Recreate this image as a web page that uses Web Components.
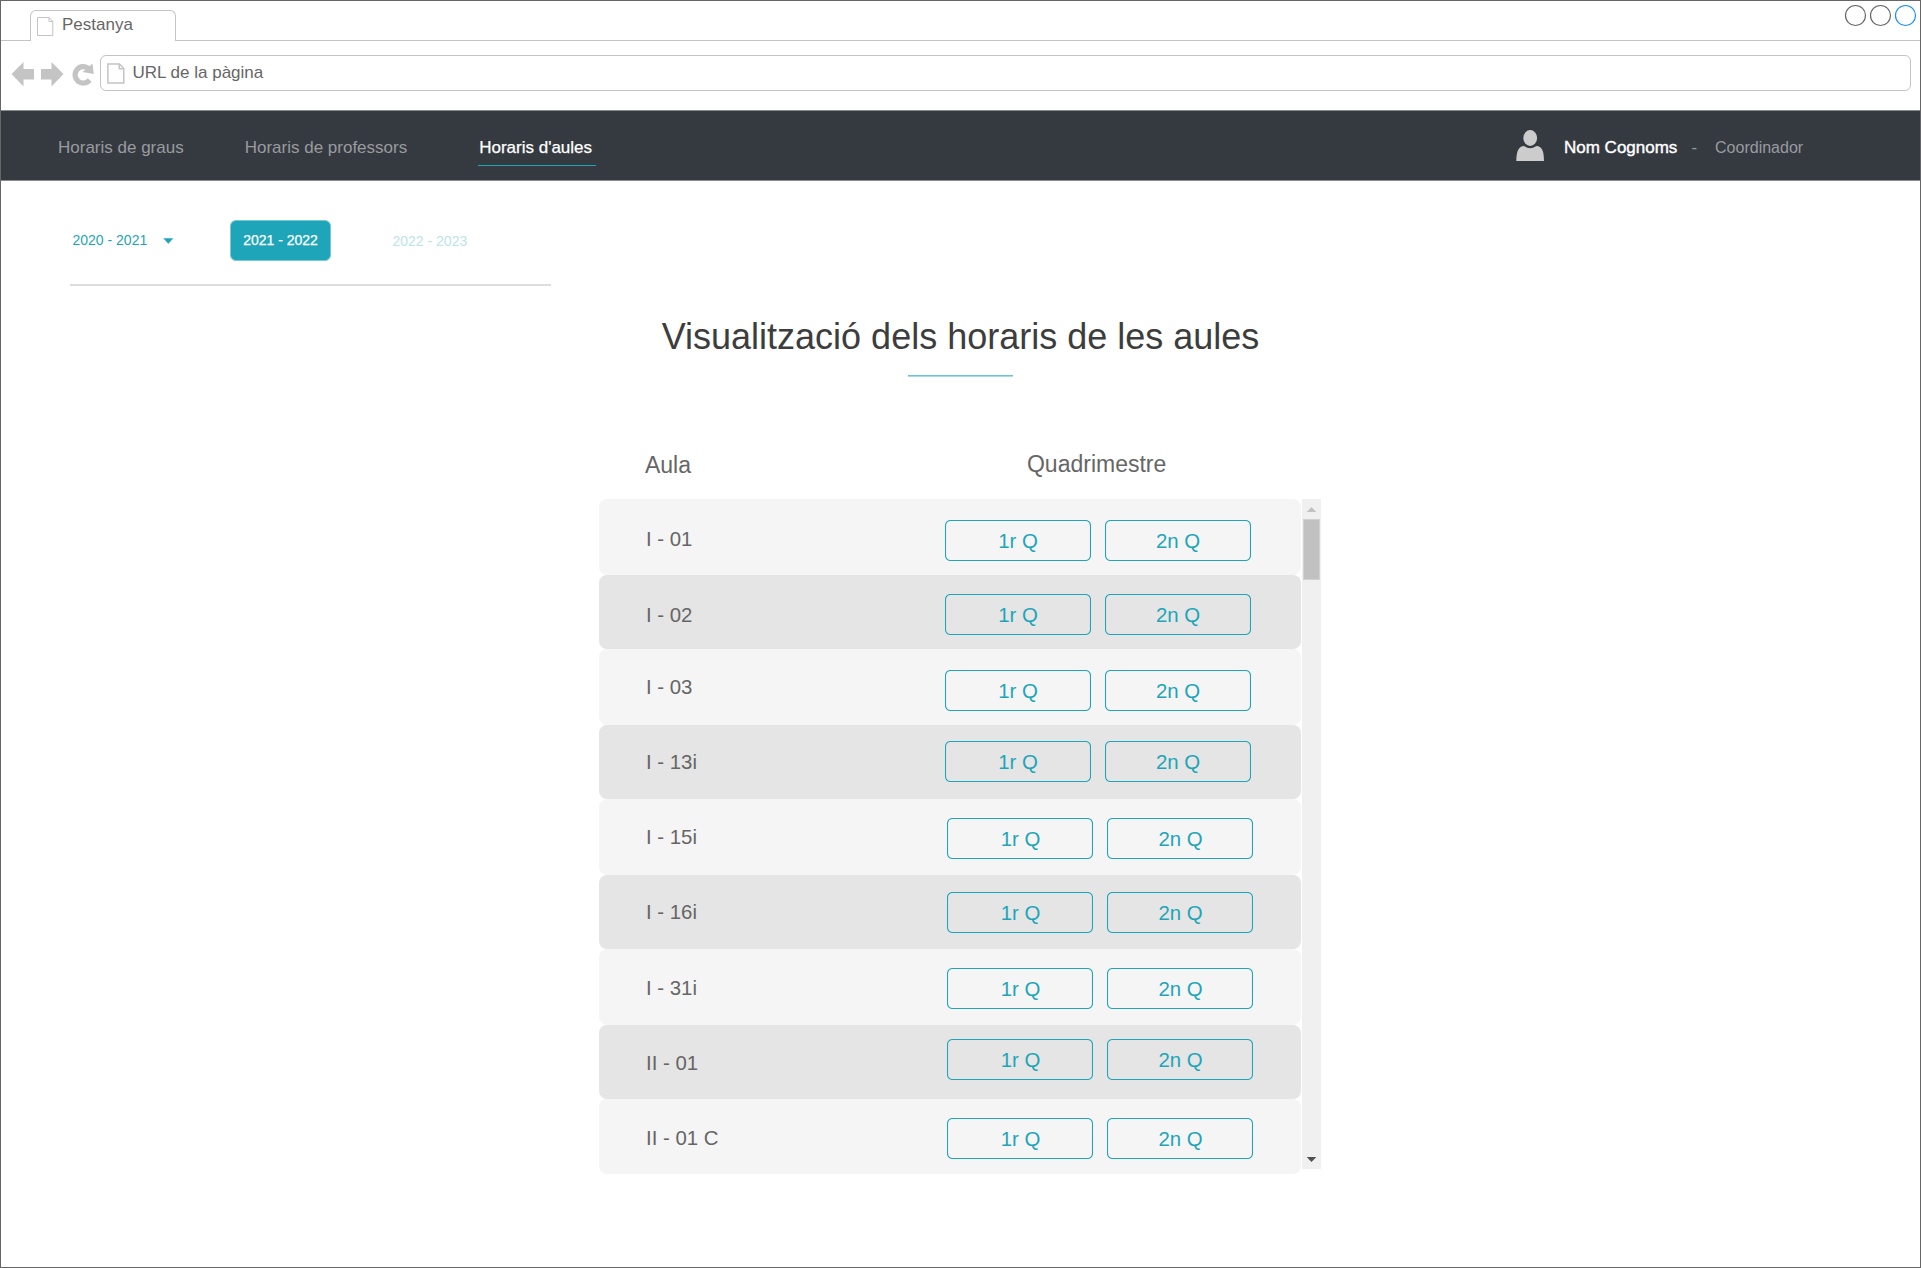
<!DOCTYPE html>
<html lang="ca">
<head>
<meta charset="utf-8">
<title>Horaris d'aules</title>
<style>
html,body{margin:0;padding:0;background:#fff}
body{font-family:"Liberation Sans",Arial,sans-serif;color:#666;overflow:hidden}
</style>
</head>
<body>
<browser-window>
  <tab-strip>Pestanya</tab-strip>
  <url-bar>URL de la pàgina</url-bar>
  <site-nav></site-nav>
  <year-picker></year-picker>
  <page-title>Visualització dels horaris de les aules</page-title>
  <room-table></room-table>
</browser-window>
<script>
const define = (name, html, setup) => customElements.define(name, class extends HTMLElement {
  constructor() {
    super();
    const t = document.createElement('template');
    t.innerHTML = '<style>*{box-sizing:border-box}svg{display:block;flex:none}</style>' + html;
    this.attachShadow({mode: 'open'}).append(t.content.cloneNode(true));
  }
  connectedCallback() { if (setup) setup(this, this.shadowRoot); }
});

define('browser-window', `<style>
:host{display:flex;flex-direction:column;box-sizing:border-box;width:1921px;height:1268px;border:1px solid #666;background:#fff}
</style><slot></slot>`);

define('tab-strip', `<style>
:host{display:flex;height:40px;font-size:17px;line-height:19px}
.lead{width:29px;border-bottom:1px solid #c4c4c4}
.tab{display:flex;width:146px;height:31px;margin-top:9px;border:1px solid #c4c4c4;border-bottom:0;border-radius:6px 6px 0 0;padding:4px 0 0 6px}
.tab svg{margin-top:1px}
.tab span{margin:0 0 0 8px}
.rest{flex:1;display:flex;justify-content:flex-end;border-bottom:1px solid #c4c4c4;padding:3px 3px 0 0}
</style>
<div class="lead"></div>
<div class="tab"><svg width="17" height="21" viewBox="0 0 17 21" fill="none" stroke="#c4c4c4"><path d="M.5 1.500H12L15.800 5.500V19.500H.5ZM12 1.500V5.500H15.800"/></svg><span><slot></slot></span></div>
<div class="rest"><svg width="73" height="24" viewBox="0 0 73 24" fill="none" stroke-width="1.200"><circle cx="11.500" cy="11.500" r="10" stroke="#666"/><circle cx="36.500" cy="11.500" r="10" stroke="#666"/><circle cx="61.500" cy="11.500" r="10" stroke="#1790f5"/></svg></div>`);

define('url-bar', `<style>
:host{display:flex;height:69px;font-size:17px;line-height:19px;padding:14px 9px 0 9px;box-sizing:border-box}
.box{flex:1;height:36px;margin-left:5px;border:1px solid #c4c4c4;border-radius:6px;display:flex;padding:7px 0 0 5.500px}
.box span{margin-left:8px}
.icons{margin-top:6px}
</style>
<svg class="icons" width="85" height="28" viewBox="0 0 85 28"><g fill="#c4c4c4">
<path d="M1.500 13 13.500 1V8H24V18.500H13.500V25.500Z"/><path d="M53.500 13 41.500 1V8H31V18.500H41.500V25.500Z"/></g>
<path d="M80.300 18.800A8.200 8.200 0 1 1 79.300 7.500" fill="none" stroke="#c4c4c4" stroke-width="5.200" transform="translate(-.6 .2)"/><path d="M82.500 2.500 83.800 13 72.500 11Z" fill="#c4c4c4"/></svg>
<div class="box"><svg width="18" height="21" viewBox="0 0 18 21" fill="none" stroke="#c4c4c4" stroke-width="1.500"><path d="M.9 1H12.500L16.800 5.500V20H.9ZM12.300 1V5.700H16.800"/></svg><span><slot></slot></span></div>`);

define('site-nav', `<style>
:host{display:flex;box-sizing:border-box;height:71px;background:#353a41;border:solid #888c8f;border-width:1px 0;color:#999b9f;font-size:17px;line-height:19px;padding-left:57px}
a,span{display:block;margin-top:27px;white-space:nowrap}
a:nth-of-type(2){margin-left:61px}
a.on{margin-left:71px;color:#fff;-webkit-text-stroke:.25px #fff;width:118px;height:28px;border-bottom:1px solid #1ea5b9;padding-left:1px}
.user{display:flex;margin-left:auto;width:405px}
.user svg{margin-top:18px}
.name{color:#fff;-webkit-text-stroke:.4px #fff;margin-left:19px}
.dash{margin-left:14px}.role{font-size:16px;line-height:17px;margin:28px 0 0 18px}
</style>
<a>Horaris de graus</a><a>Horaris de professors</a><a class="on">Horaris d'aules</a>
<div class="user"><svg width="30" height="33" viewBox="0 0 30 33" fill="#ccc"><ellipse cx="15.200" cy="9" rx="6.900" ry="7.900"/><path d="M1.300 32C1.500 25 2.200 20 6.500 17.500Q8 16.700 9.500 17.200Q15.200 21.500 21 17.200Q22.500 16.700 24 17.500C28.300 20 28.900 25 29 32Z"/></svg>
<span class="name">Nom Cognoms</span><span class="dash">-</span><span class="role">Coordinador</span></div>`);

define('year-picker', `<style>
:host{display:flex;box-sizing:border-box;width:481px;height:105px;margin-left:69px;border-bottom:2px solid #ddd;padding-top:39px;font-size:14px;line-height:16px;color:#1ea5b9}
div{white-space:nowrap}
.prev{display:flex;padding:12px 0 0 2.500px;width:160px}
.prev svg{margin:6px 0 0 16px}
.now{width:101px;height:41px;background:#1ea5b9;border:1px solid #79c9d5;border-radius:6px;color:#fff;text-align:center;padding-top:11px;-webkit-text-stroke:.25px #fff}
.next{margin-left:61.500px;padding-top:13px;color:#bbe4ea}
</style>
<div class="prev">2020 - 2021<svg width="11" height="7" viewBox="0 0 11 7"><path d="M.3.2H10.300L5.300 5.800Z" fill="#1ea5b9"/></svg></div>
<div class="now">2021 - 2022</div><div class="next">2022 - 2023</div>`);

define('page-title', `<style>
:host{display:flex;flex-direction:column;align-items:center;font-size:36px;line-height:41px;color:#3d3d3d;padding-top:30px;height:91px;box-sizing:border-box}
i{width:105px;height:2px;margin-top:18px;background:linear-gradient(#6cc4d0 50%,#a5dce3 50%)}
</style><slot></slot><i></i>`);

define('room-table', `<style>
:host{display:flex;flex-direction:column;margin-left:598.300px;width:722px}
.head{display:flex;height:122px;font-size:23px;line-height:26px}
.head span:first-child{margin:75px 0 0 45.700px;width:382px}
.head span:last-child{margin-top:74px}
.body{display:flex;align-items:flex-start}
.rows{width:702px}
</style>
<div class="head"><span>Aula</span><span>Quadrimestre</span></div>
<div class="body"><div class="rows"></div><scroll-bar></scroll-bar></div>`, (el, root) => {
  // name, row height, label offset, button offset, button text offset, left edge of the buttons
  const rooms = [
    ['I - 01', 76, 29, 20.8, 10.2, 345.700],
    ['I - 02', 74, 29, 19, 10, 345.700],
    ['I - 03', 76, 27, 20.8, 10.2, 345.700],
    ['I - 13i', 74, 26, 16.1, 9.900, 345.700],
    ['I - 15i', 76, 27, 18.700, 10.3, 348.200],
    ['I - 16i', 74, 26, 17.4, 9.600, 348.200],
    ['I - 31i', 76, 28, 18.700, 10.3, 348.200],
    ['II - 01', 74, 27, 14, 10, 348.200],
    ['II - 01 C', 75, 28, 18.700, 10.3, 348.200]
  ];
  const box = root.querySelector('.rows');
  rooms.forEach(([name, h, label, top, text, left]) => {
    const row = document.createElement('room-row');
    row.textContent = name;
    row.style.cssText = `--h:${h}px;--label:${label}px;--top:${top}px;--text:${text}px;--left:${left}px`;
    if (h === 74) row.style.setProperty('--bg', '#e5e5e5');
    box.append(row);
  });
});

define('room-row', `<style>
:host{display:flex;box-sizing:border-box;height:var(--h);background:var(--bg,#f5f5f5);border-radius:8px;font-size:20.400px;line-height:23px;padding-left:46.700px}
.name{width:calc(var(--left) - 46.700px);padding-top:var(--label)}
.buttons{display:flex;gap:14px;padding-top:var(--top)}
</style><div class="name"><slot></slot></div><div class="buttons"><quad-button>1r Q</quad-button><quad-button>2n Q</quad-button></div>`);

define('quad-button', `<style>
:host{display:grid;width:146px;height:41px;color:#1ea5b9}
svg,div{grid-area:1/1}
div{text-align:center;padding-top:var(--text)}
</style><svg width="146" height="41" viewBox="0 0 146 41"><rect x=".5" y=".5" width="145" height="40" rx="5" fill="none" stroke="#1ea5b9" stroke-width="1.100"/></svg><div><slot></slot></div>`);

define('scroll-bar', `<style>
:host{display:flex;flex-direction:column;align-items:center;justify-content:space-between;box-sizing:border-box;width:19px;height:670px;margin-left:1px;background:#f0f0f0;padding:8px 0 7px}
.thumb{width:17px;height:61px;background:#c1c1c1;border:1px solid #d2d2d2;margin-top:7px}
</style>
<div><svg width="17" height="5" viewBox="0 0 17 5"><path d="M3.700 5 8.500 0 13.300 5Z" fill="#c1c1c1"/></svg><div class="thumb"></div></div>
<svg width="17" height="5" viewBox="0 0 17 5"><path d="M3.700 0 8.500 5 13.300 0Z" fill="#505050"/></svg>`);
</script>
</body>
</html>
